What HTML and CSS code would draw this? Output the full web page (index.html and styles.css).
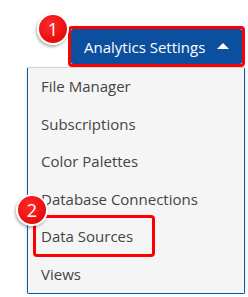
FILE: index.html
```html
<!DOCTYPE html>
<html lang="en">
<head>
    <meta charset="UTF-8">
    <title>Analytics Settings</title>
    <link rel="stylesheet" href="styles.css">
</head>
<body>
<div class="dropdown">
    <div class="toggle-wrap">
        <button class="toggle">
            <span class="label">Analytics Settings</span>
            <svg class="caret" width="12" height="6" viewBox="0 0 12 6"><path d="M0 6 L6 0 L12 6 Z" fill="#fff"/></svg>
        </button>
        <span class="highlight"></span>
        <span class="step step-1">1</span>
    </div>

    <ul class="menu">
        <li>File Manager</li>
        <li>Subscriptions</li>
        <li>Color Palettes</li>
        <li>Database Connections</li>
        <li class="marked">
            Data Sources
            <span class="highlight"></span>
            <span class="step step-2">2</span>
        </li>
        <li>Views</li>
    </ul>
</div>
</body>
</html>
```

FILE: styles.css
```css
body {
    font-family: 'Open Sans', sans-serif;
    margin: 0;
    background-color: #fff;
    color: #444;
}
.dropdown {
    width: 218px;
    margin-left: 27px;
    padding-top: 29px;
}
.toggle-wrap {
    position: relative;
    display: flex;
    justify-content: flex-end;
    margin-right: 3px;
    margin-bottom: 3px;
}
.toggle {
    display: flex;
    align-items: center;
    justify-content: space-between;
    width: 171px;
    height: 35px;
    padding: 0 13px 0 13px;
    background-color: #0b4f9e;
    color: #fff;
    border: none;
    border-radius: 2px;
    font-family: 'Open Sans', sans-serif;
    font-size: 15px;
    white-space: nowrap;
    box-sizing: border-box;
}
.caret {
    margin-top: -1px;
}
.highlight {
    position: absolute;
    top: -3px;
    right: -3px;
    width: 177px;
    height: 41px;
    border: 3px solid #f00;
    border-radius: 4px;
    box-sizing: border-box;
}
.step {
    position: absolute;
    width: 28px;
    height: 28px;
    line-height: 28px;
    border: 2px solid #fff;
    border-radius: 50%;
    background: radial-gradient(circle at 40% 35%, #ff2a2a, #dd0000);
    color: #fff;
    font-size: 18px;
    text-align: center;
    box-shadow: -1px 2px 3px rgba(0, 0, 0, 0.3);
}
.step-1 {
    left: 10px;
    top: -16px;
}
.menu {
    list-style: none;
    margin: 0;
    padding: 0;
    background-color: #f5f5f5;
    border: 1px solid #0b57a8;
    border-top-color: #c9d6e6;
    border-radius: 2px;
    box-shadow: 0 2px 4px rgba(0, 0, 0, 0.15);
}
.menu li {
    position: relative;
    height: 37.5px;
    line-height: 37.5px;
    padding-left: 13px;
    font-size: 15px;
}
.marked .highlight {
    top: -3px;
    left: 5px;
    width: 122px;
    height: 42px;
}
.step-2 {
    left: -12px;
    top: -24px;
}
```
